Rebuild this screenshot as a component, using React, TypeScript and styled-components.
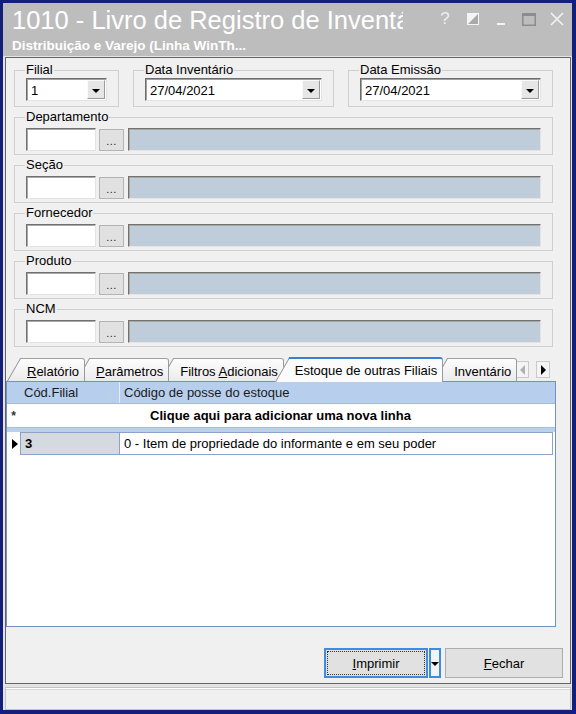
import React from 'react';
import styled, { createGlobalStyle } from 'styled-components';

const GlobalStyle = createGlobalStyle`
  html, body { margin: 0; padding: 0; background: #13207a; }
  body {
    font-family: "Liberation Sans", Arial, sans-serif;
    font-size: 13px;
    color: #000;
  }
  * { box-sizing: border-box; }
`;

const Window = styled.div`
  width: 576px;
  height: 714px;
  padding: 3px 4px 4px 3px;
  background: #13207a;
  display: flex;
  flex-direction: column;
`;

const TitleBar = styled.div`
  flex: none;
  height: 53px;
  background: #bdbdbd;
  display: flex;
  padding-left: 9px;
`;

const TitleTexts = styled.div`
  flex: 1;
  min-width: 0;
  padding-top: 2px;
`;

const Title = styled.div`
  width: 391px;
  overflow: hidden;
  white-space: nowrap;
  color: #fff;
  font-size: 25.5px;
  line-height: 30px;
`;

const Subtitle = styled.div`
  margin-top: 3px;
  color: #fff;
  font-weight: bold;
  font-size: 13.5px;
  line-height: 16px;
  white-space: nowrap;
`;

const TitleIcons = styled.div`
  display: flex;
  height: 26px;
  margin-top: 3px;
  padding-right: 1px;
`;

const TitleIcon = styled.div`
  width: 28px;
  display: flex;
  align-items: center;
  justify-content: center;
  color: #eeeeee;
  font-size: 17px;
`;

const Frame = styled.div`
  flex: 1;
  display: flex;
  flex-direction: column;
  gap: 3px;
  padding: 1px 1px 0 2px;
  background: #e4e4e4;
`;

const Body = styled.div`
  flex: 1;
  display: flex;
  flex-direction: column;
  background: #f0f0f0;
  border: 1px solid #646464;
`;

const FormArea = styled.div`
  width: 539px;
  margin: 5px 0 0 8px;
  display: flex;
  flex-direction: column;
  gap: 3px;
`;

const TopRow = styled.div`
  display: grid;
  grid-template-columns: 105px 201px 1fr;
  column-gap: 14px;
`;

const GroupBox = styled.fieldset`
  margin: 0;
  min-width: 0;
  padding: 0 11px 3px 11px;
  border: 1px solid #cfcfcf;
`;

const GroupLabel = styled.legend`
  padding: 0 1px;
  margin-left: -1px;
  font-size: 13px;
  line-height: 14px;
`;

const Combo = styled.div`
  margin: 1px 0 2px;
  height: 23px;
  display: flex;
  align-items: center;
  background: #fff;
  border: 1px solid;
  border-color: #6d6d6d #e3e3e3 #e3e3e3 #6d6d6d;
  box-shadow: inset 1px 1px 0 #a0a0a0;
  padding: 1px 1px 1px 4px;
`;

const ComboText = styled.span`
  flex: 1;
  padding-top: 1px;
`;

const ComboButton = styled.div`
  width: 18px;
  height: 19px;
  display: flex;
  align-items: center;
  justify-content: center;
  background: #e6e6e6;
  border: 1px solid;
  border-color: #fafafa #9a9a9a #9a9a9a #fafafa;
`;

const DownArrow = styled.span`
  width: 0;
  height: 0;
  border-left: 4px solid transparent;
  border-right: 4px solid transparent;
  border-top: 4px solid #000;
  margin-top: 2px;
`;

const LookupRow = styled.div`
  margin-top: 4px;
  height: 23px;
  display: flex;
  align-items: stretch;
`;

const Sunken = styled.div<{ $fill?: boolean }>`
  border: 1px solid;
  border-color: #707070 #e3e3e3 #e3e3e3 #707070;
  box-shadow: inset 1px 1px 0 #a8a8a8;
  background: ${p => (p.$fill ? '#bfcddb' : '#fff')};
  ${p => (p.$fill ? 'flex: 1;' : 'width: 70px;')}
`;

const DotsButton = styled.div`
  width: 25px;
  margin: 1px 4px 0 3px;
  display: flex;
  align-items: flex-end;
  justify-content: center;
  padding-bottom: 3px;
  background: #e1e1e1;
  border: 1px solid #b4b4b4;
  font-size: 11px;
  line-height: 11px;
  letter-spacing: 0.5px;
  color: #222;
`;

const TabArea = styled.div`
  margin: 10px 14px 0 0;
  display: flex;
  flex-direction: column;
`;

const TabStrip = styled.div`
  position: relative;
  z-index: 2;
  height: 24px;
  display: flex;
  align-items: flex-end;
  padding-left: 1px;
`;

const Tab = styled.div<{ $active?: boolean; $z: number }>`
  position: relative;
  z-index: ${p => (p.$active ? 20 : p.$z)};
  height: ${p => (p.$active ? 25 : 23)}px;
  margin-left: -9px;
  margin-bottom: ${p => (p.$active ? -1 : 0)}px;
  padding: ${p => (p.$active ? '2px 6px 0 20px' : '3px 6px 0 20px')};
  display: flex;
  align-items: center;
  white-space: nowrap;
  font-size: 13px;
  &:first-child { margin-left: 0; }
  &::before {
    content: '';
    position: absolute;
    z-index: -1;
    left: 0;
    top: 0;
    bottom: 0;
    width: 30px;
    background: ${p => (p.$active ? '#fbfbfb' : 'linear-gradient(#fdfdfd, #ebebeb)')};
    border-left: 1px solid #8f8f8f;
    border-top: ${p => (p.$active ? '2px solid #3b7fd3' : '1px solid #a0a0a0')};
    transform-origin: 0 100%;
    transform: skewX(-30deg);
  }
  &::after {
    content: '';
    position: absolute;
    z-index: -1;
    left: 14px;
    right: 0;
    top: 0;
    bottom: 0;
    background: ${p => (p.$active ? '#fbfbfb' : 'linear-gradient(#fdfdfd, #ebebeb)')};
    border-top: ${p => (p.$active ? '2px solid #3b7fd3' : '1px solid #a0a0a0')};
    border-right: 1px solid #9a9a9a;
    border-top-right-radius: 3px;
  }
`;

const TabText = styled.span`
  white-space: pre;
`;

const ScrollArrows = styled.div`
  position: absolute;
  right: 6px;
  bottom: 3px;
  display: flex;
  gap: 7px;
  padding-left: 1px;
  background: #f0f0f0;
`;

const ArrowButton = styled.div`
  width: 14px;
  height: 17px;
  display: flex;
  align-items: center;
  justify-content: center;
  background: #f4f4f4;
  border: 1px solid #cacaca;
`;

const SideArrow = styled.span<{ $dir: 'left' | 'right'; $disabled?: boolean }>`
  width: 0;
  height: 0;
  border-top: 5px solid transparent;
  border-bottom: 5px solid transparent;
  ${p =>
    p.$dir === 'left'
      ? `border-right: 5px solid ${p.$disabled ? '#b0b0b0' : '#000'};`
      : `border-left: 5px solid ${p.$disabled ? '#b0b0b0' : '#000'};`}
`;

const Grid = styled.div`
  height: 246px;
  display: flex;
  flex-direction: column;
  background: #fff;
  border: 1px solid #7390be;
`;

const GridRow = styled.div<{ $h: number }>`
  display: grid;
  grid-template-columns: 13px 100px 1fr;
  height: ${p => p.$h}px;
`;

const HeaderRow = styled(GridRow)`
  background: #b7ceec;
  border-bottom: 1px solid #a2bbe0;
`;

const HeaderCell = styled.div<{ $sep?: boolean }>`
  display: flex;
  align-items: center;
  padding: 0 4px;
  border-right: ${p => (p.$sep ? '1px solid #e3ecf8' : 'none')};
  color: #1a1a1a;
`;

const SortMark = styled.span`
  margin-left: auto;
  margin-right: 2px;
  color: #c6d2e2;
  font-size: 10px;
`;

const Selector = styled.div`
  display: flex;
  align-items: center;
  justify-content: center;
  font-weight: bold;
  font-size: 12px;
  color: #333;
`;

const RowPointer = styled.span`
  width: 0;
  height: 0;
  border-top: 5px solid transparent;
  border-bottom: 5px solid transparent;
  border-left: 6px solid #000;
  margin-left: 2px;
`;

const AddRowText = styled.div`
  grid-column: 2 / 4;
  display: flex;
  align-items: center;
  justify-content: center;
  padding-right: 14px;
  font-weight: bold;
`;

const RowBand = styled.div`
  height: 5px;
  background: #b9d0ee;
  border-top: 1px solid #a7c0e3;
`;

const DataCell = styled.div<{ $shade?: boolean }>`
  display: flex;
  align-items: center;
  padding: 0 4px;
  background: ${p => (p.$shade ? '#d5dae1' : '#fff')};
  font-weight: ${p => (p.$shade ? 'bold' : 'normal')};
  border: 1px solid #8ba3c8;
  border-left: ${p => (p.$shade ? '1px solid #8ba3c8' : 'none')};
  margin-right: ${p => (p.$shade ? 0 : 2)}px;
`;

const ButtonBar = styled.div`
  margin-top: auto;
  padding: 0 7px 5px 0;
  display: flex;
  justify-content: flex-end;
`;

const SplitButton = styled.div`
  display: flex;
  gap: 1px;
  margin-right: 4px;
`;

const Button = styled.div<{ $focused?: boolean; $w: number }>`
  width: ${p => p.$w}px;
  height: 30px;
  display: flex;
  align-items: center;
  justify-content: center;
  background: #e1e1e1;
  border: ${p => (p.$focused ? '2px solid #3c8de2' : '1px solid #adadad')};
  position: relative;
  ${p =>
    p.$focused
      ? `&::after { content: ''; position: absolute; inset: 1px; border: 1px dotted #333; }`
      : ''}
`;

const DropPart = styled.div`
  width: 12px;
  height: 30px;
  display: flex;
  align-items: center;
  justify-content: center;
  background: #f3f3f3;
  border: 2px solid #3c8de2;
`;

const StatusBar = styled.div`
  flex: none;
  height: 23px;
  background: #f0f0f0;
  border: 1px solid #c4c4c4;
  box-shadow: inset 0 1px 0 #fff, inset 0 2px 0 #d9d9d9;
`;

const tabs = [
  { id: 'rel', label: <><u>R</u>elatório</> },
  { id: 'par', label: <><u>P</u>arâmetros</> },
  { id: 'fil', label: <>Filtros <u>A</u>dicionais</> },
  { id: 'est', label: <>Estoque de outras Filiais</>, active: true },
  { id: 'inv', label: <>Inventário</> },
];

const lookups = ['Departamento', 'Seção', 'Fornecedor', 'Produto', 'NCM'];

function App() {
  return (
    <Window>
      <GlobalStyle />
      <TitleBar>
        <TitleTexts>
          <Title>1010 - Livro de Registro de Inventário</Title>
          <Subtitle>Distribuição e Varejo (Linha WinTh...</Subtitle>
        </TitleTexts>
        <TitleIcons>
          <TitleIcon>?</TitleIcon>
          <TitleIcon>
            <svg width="12" height="12" viewBox="0 0 12 12">
              <rect x="0.5" y="0.5" width="11" height="11" fill="#a9a9a9" stroke="#f4f4f4" />
              <polygon points="0,0 12,0 0,12" fill="#f4f4f4" />
            </svg>
          </TitleIcon>
          <TitleIcon>
            <svg width="10" height="14" viewBox="0 0 10 14">
              <rect x="1" y="11" width="8" height="2" fill="#f4f4f4" />
            </svg>
          </TitleIcon>
          <TitleIcon>
            <svg width="14" height="13" viewBox="0 0 14 13">
              <rect x="0.75" y="0.75" width="12.5" height="11.5" fill="none" stroke="#8c8c8c" strokeWidth="1.5" />
              <rect x="0" y="0" width="14" height="3" fill="#8c8c8c" />
            </svg>
          </TitleIcon>
          <TitleIcon>
            <svg width="14" height="14" viewBox="0 0 14 14">
              <path d="M1 1 L13 13 M13 1 L1 13" stroke="#f4f4f4" strokeWidth="1.6" />
            </svg>
          </TitleIcon>
        </TitleIcons>
      </TitleBar>

      <Frame>
        <Body>
          <FormArea>
            <TopRow>
              <GroupBox>
                <GroupLabel>Filial</GroupLabel>
                <Combo>
                  <ComboText>1</ComboText>
                  <ComboButton><DownArrow /></ComboButton>
                </Combo>
              </GroupBox>
              <GroupBox>
                <GroupLabel>Data Inventário</GroupLabel>
                <Combo>
                  <ComboText>27/04/2021</ComboText>
                  <ComboButton><DownArrow /></ComboButton>
                </Combo>
              </GroupBox>
              <GroupBox>
                <GroupLabel>Data Emissão</GroupLabel>
                <Combo>
                  <ComboText>27/04/2021</ComboText>
                  <ComboButton><DownArrow /></ComboButton>
                </Combo>
              </GroupBox>
            </TopRow>

            {lookups.map(name => (
              <GroupBox key={name}>
                <GroupLabel>{name}</GroupLabel>
                <LookupRow>
                  <Sunken />
                  <DotsButton>...</DotsButton>
                  <Sunken $fill />
                </LookupRow>
              </GroupBox>
            ))}
          </FormArea>

          <TabArea>
            <TabStrip>
              {tabs.map((t, i) => (
                <Tab key={t.id} $active={t.active} $z={tabs.length - i}>
                  <TabText>{t.label}</TabText>
                </Tab>
              ))}
              <ScrollArrows>
                <ArrowButton><SideArrow $dir="left" $disabled /></ArrowButton>
                <ArrowButton><SideArrow $dir="right" /></ArrowButton>
              </ScrollArrows>
            </TabStrip>

            <Grid>
              <HeaderRow $h={22}>
                <HeaderCell />
                <HeaderCell $sep>
                  Cód.Filial
                  <SortMark>△</SortMark>
                </HeaderCell>
                <HeaderCell>Código de posse do estoque</HeaderCell>
              </HeaderRow>
              <GridRow $h={23}>
                <Selector>*</Selector>
                <AddRowText>Clique aqui para adicionar uma nova linha</AddRowText>
              </GridRow>
              <RowBand />
              <GridRow $h={23}>
                <Selector><RowPointer /></Selector>
                <DataCell $shade>3</DataCell>
                <DataCell>0 - Item de propriedade do informante e em seu poder</DataCell>
              </GridRow>
            </Grid>
          </TabArea>

          <ButtonBar>
            <SplitButton>
              <Button $focused $w={104}><span><u>I</u>mprimir</span></Button>
              <DropPart><DownArrow /></DropPart>
            </SplitButton>
            <Button $w={118}><span><u>F</u>echar</span></Button>
          </ButtonBar>
        </Body>
        <StatusBar />
      </Frame>
    </Window>
  );
}

export default App;
